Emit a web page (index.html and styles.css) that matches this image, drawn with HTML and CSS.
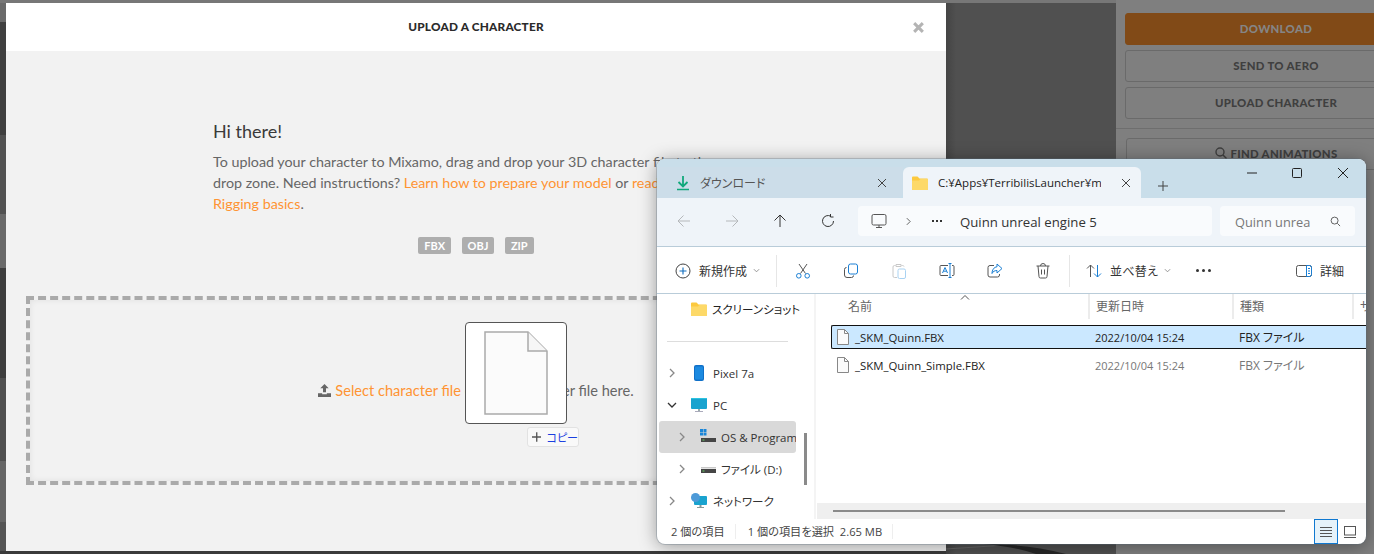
FILE: index.html
```html
<!DOCTYPE html>
<html lang="ja">
<head>
  <meta charset="UTF-8">
  <title>Upload a character</title>
  <link rel="stylesheet" href="styles.css">
</head>
<body>
  <div class="desk">
    <div class="left-strip"></div>

    <section class="modal">
      <header class="modal-head">
        <h1>UPLOAD A CHARACTER</h1>
        <svg class="modal-x" viewBox="0 0 12 12"><path d="M2 2l8 8M10 2l-8 8"/></svg>
      </header>
      <div class="modal-body">
        <div class="intro">
          <h2>Hi there!</h2>
          <p>To upload your character to Mixamo, drag and drop your 3D character file to the<br>drop zone. Need instructions? <a>Learn how to prepare your model</a> or <a>read Auto-</a><br><a>Rigging basics</a>.</p>
        </div>
        <div class="chips">
          <span class="chip">FBX</span>
          <span class="chip">OBJ</span>
          <span class="chip">ZIP</span>
        </div>
        <div class="drop">
          <svg class="upload-ico" viewBox="0 0 14 14"><path d="M7 0l4.500 4.500H8.600V9H5.400V4.500H2.500z"/><path d="M0 10h4.500v1h5v-1H14v4H0z"/></svg>
          <a>Select character file</a>&nbsp;or drop character file here.
        </div>
      </div>
    </section>

    <div class="gutter">
      <svg class="scene" viewBox="0 0 170 10"><path d="M0 5L60 1l50 9" fill="none" stroke="#666" stroke-width="1"/><path d="M38 0C60 0 90 2 120 10H90C75 5 60 2 38 0z" fill="#272727"/></svg>
    </div>

    <aside class="side">
      <div class="side-btns">
        <div class="btn btn-dl">DOWNLOAD</div>
        <div class="btn">SEND TO AERO</div>
        <div class="btn">UPLOAD CHARACTER</div>
      </div>
      <div class="side-find">
        <div class="btn">
          <svg class="find-ico" viewBox="0 0 12 12"><circle cx="5" cy="5" r="4"/><path d="M8 8l3.500 3.500"/></svg>
          FIND ANIMATIONS
        </div>
      </div>
    </aside>

    <!-- file being dragged over the drop zone -->
    <div class="ghost">
      <svg viewBox="0 0 64 84" width="64" height="84"><path d="M1 1h43l19 19v63H1z" fill="#fbfbfb" stroke="#ababab" stroke-width="1.500"/><path d="M44 1v19h19" fill="#f6f6f6" stroke="#ababab" stroke-width="1.500"/></svg>
    </div>
    <div class="copy-tip">
      <svg class="plus" viewBox="0 0 10 10"><path d="M5 0v10M0 5h10"/></svg>
      <span class="copy-word">コピー</span>
    </div>

    <section class="win">
      <div class="tabs">
        <div class="tab">
          <svg class="ico" viewBox="0 0 16 16"><path d="M8 1v10M3.500 7L8 11.500 12.500 7" fill="none" stroke="#12a87c" stroke-width="1.800"/><path d="M2 14.500h12" stroke="#12a87c" stroke-width="1.600"/></svg>
          <span class="tab-name">ダウンロード</span>
          <svg class="tab-x" viewBox="0 0 10 10"><path d="M1 1l8 8M9 1l-8 8"/></svg>
        </div>
        <div class="tab tab-on">
          <svg class="ico" viewBox="0 0 16 16"><path d="M0 2.500A1 1 0 0 1 1 1.500h4.500l2 2H15a1 1 0 0 1 1 1V14a1 1 0 0 1-1 1H1a1 1 0 0 1-1-1z" fill="#fcc93f"/><path d="M0 5.500h7l1.500-1.500H16V14a1 1 0 0 1-1 1H1a1 1 0 0 1-1-1z" fill="#fdd968"/></svg>
          <span class="tab-name">C:¥Apps¥TerribilisLauncher¥m</span>
          <svg class="tab-x" viewBox="0 0 10 10"><path d="M1 1l8 8M9 1l-8 8"/></svg>
        </div>
        <svg class="tab-plus" viewBox="0 0 12 12"><path d="M6 1v10M1 6h10"/></svg>
        <div class="win-ctrls">
          <svg viewBox="0 0 12 12"><path d="M1 6h10"/></svg>
          <svg viewBox="0 0 12 12"><rect x="1.500" y="1.500" width="9" height="9" rx="1"/></svg>
          <svg viewBox="0 0 12 12"><path d="M1 1l10 10M11 1L1 11"/></svg>
        </div>
      </div>

      <div class="nav">
        <div class="nav-btns">
          <svg class="faded" viewBox="0 0 14 14"><path d="M13 7H1M6.500 1.500L1 7l5.500 5.500"/></svg>
          <svg class="faded" viewBox="0 0 14 14"><path d="M1 7h12M7.500 1.500L13 7l-5.500 5.500"/></svg>
          <svg viewBox="0 0 14 14"><path d="M7 13V1M1.500 6.500L7 1l5.500 5.500"/></svg>
          <svg viewBox="0 0 14 14"><path d="M12.500 7A5.500 5.500 0 1 1 9.800 2.300M9.500 0v3h3"/></svg>
        </div>
        <div class="addr">
          <svg class="addr-pc" viewBox="0 0 16 16"><rect x="1" y="1.500" width="14" height="10.500" rx="1.500"/><path d="M5 14.500h6M8 12v2.500"/></svg>
          <svg class="addr-chev" viewBox="0 0 6 10"><path d="M1 1l4 4-4 4"/></svg>
          <span class="addr-dots"><b></b><b></b><b></b></span>
          <span class="addr-text">Quinn unreal engine 5</span>
        </div>
        <div class="search">
          <span class="search-text">Quinn unrea</span>
          <svg viewBox="0 0 12 12"><circle cx="5" cy="5" r="3.800"/><path d="M8 8l3 3"/></svg>
        </div>
      </div>

      <div class="tools">
        <div class="tool tool-new">
          <svg viewBox="0 0 16 16"><circle cx="8" cy="8" r="7" fill="none" stroke="#444" stroke-width="1"/><path d="M8 4.500v7M4.500 8h7" stroke="#0f6cbd" stroke-width="1.100"/></svg>
          <span>新規作成</span>
          <svg class="caret" viewBox="0 0 8 5"><path d="M1 1l3 3 3-3"/></svg>
        </div>
        <i class="tool-sep"></i>
        <div class="tool-icons">
          <svg viewBox="0 0 16 16"><path d="M4 1l6.500 9.500M12 1L5.500 10.500" fill="none" stroke="#555" stroke-width="1"/><circle cx="3.800" cy="12.800" r="2.300" fill="none" stroke="#1a7fd4"/><circle cx="12.200" cy="12.800" r="2.300" fill="none" stroke="#1a7fd4"/></svg>
          <svg viewBox="0 0 16 16"><rect x="5.500" y="1" width="9" height="10" rx="2" fill="none" stroke="#1a7fd4"/><path d="M3.500 4.500A2 2 0 0 0 1.500 6.500V12a2.500 2.500 0 0 0 2.500 2.500h4.500a2 2 0 0 0 2-2" fill="none" stroke="#555"/></svg>
          <svg viewBox="0 0 16 16"><path d="M4.500 2.500h-1a1.500 1.500 0 0 0-1.500 1.500v9A1.500 1.500 0 0 0 3.500 14.500H6M10.500 2.500h1A1.500 1.500 0 0 1 13 3.500M5 1.500h5v2H5z" fill="none" stroke="#c8c8c8"/><rect x="7" y="6" width="7.500" height="9.500" rx="1.500" fill="none" stroke="#a9d2f2"/></svg>
          <svg viewBox="0 0 16 16"><path d="M9 2.500H2A1 1 0 0 0 1 3.500v8a1 1 0 0 0 1 1h7M13 2.500h1a1 1 0 0 1 1 1v8a1 1 0 0 1-1 1h-1" fill="none" stroke="#555"/><path d="M11 .5v14M9.500.5h3M9.500 14.500h3" fill="none" stroke="#1a7fd4"/><path d="M3.500 10L6 4.500 8.500 10M4.500 8.200h3" fill="none" stroke="#1a7fd4"/></svg>
          <svg viewBox="0 0 16 16"><path d="M7 2.500H3A2 2 0 0 0 1 4.500V12a2 2 0 0 0 2 2h7.500a2 2 0 0 0 2-2v-1" fill="none" stroke="#555"/><path d="M10 1l5 4.500-5 4.500V7.500C7.500 7.500 6 8.500 5 10.500 5 7 7 4 10 3.800z" fill="none" stroke="#1a7fd4"/></svg>
          <svg viewBox="0 0 16 16"><path d="M1.500 3h13M5.500 3a2.500 2.500 0 0 1 5 0M3 3l1 10.500A1.500 1.500 0 0 0 5.500 15h5a1.500 1.500 0 0 0 1.500-1.500L13 3M6.500 6.500v5M9.500 6.500v5" fill="none" stroke="#555"/></svg>
        </div>
        <i class="tool-sep tool-sep-two"></i>
        <div class="tool tool-sort">
          <svg viewBox="0 0 16 16"><path d="M4.500 14V2M1 5.500L4.500 2 8 5.500" fill="none" stroke="#555"/><path d="M11.500 2v12M8 10.500l3.500 3.500 3.500-3.500" fill="none" stroke="#1a7fd4"/></svg>
          <span>並べ替え</span>
          <svg class="caret" viewBox="0 0 8 5"><path d="M1 1l3 3 3-3"/></svg>
        </div>
        <div class="tool-more"><b></b><b></b><b></b></div>
        <div class="tool tool-detail">
          <svg viewBox="0 0 16 12"><rect x=".5" y=".5" width="15" height="11" rx="2" fill="none" stroke="#555"/><path d="M10.500.5h3a2 2 0 0 1 2 2v7a2 2 0 0 1-2 2h-3zM12 3.500h2M12 6h2M12 8.500h2" fill="none" stroke="#1a7fd4"/></svg>
          <span>詳細</span>
        </div>
      </div>

      <div class="panes">
        <div class="tree">
          <div class="tree-row tree-shots">
            <svg class="ico" viewBox="0 0 16 16"><path d="M0 2.500A1 1 0 0 1 1 1.500h4.500l2 2H15a1 1 0 0 1 1 1V14a1 1 0 0 1-1 1H1a1 1 0 0 1-1-1z" fill="#fcc93f"/><path d="M0 5.500h7l1.500-1.500H16V14a1 1 0 0 1-1 1H1a1 1 0 0 1-1-1z" fill="#fdd968"/></svg>
            <span>スクリーンショット</span>
          </div>
          <hr class="tree-rule">
          <div class="tree-row">
            <svg class="chev" viewBox="0 0 6 10"><path d="M1 1l4 4-4 4"/></svg>
            <svg class="ico" viewBox="0 0 16 16"><rect x="3" y="0" width="10" height="16" rx="2" fill="#1070c8"/><rect x="4" y="1.500" width="8" height="13" rx="1" fill="#1c8ae0"/></svg>
            <span>Pixel 7a</span>
          </div>
          <div class="tree-row">
            <svg class="chev chev-open" viewBox="0 0 10 6"><path d="M1 1l4 4 4-4"/></svg>
            <svg class="ico" viewBox="0 0 16 16"><rect x="0" y="1" width="16" height="11" rx="1" fill="#19a3cf"/><rect x="0" y="1" width="16" height="1" fill="#2cc3e0"/><rect x="7" y="12" width="2" height="2" fill="#9aa"/><rect x="4" y="14" width="8" height="1" fill="#aab"/></svg>
            <span>PC</span>
          </div>
          <div class="tree-row tree-sub tree-sel">
            <svg class="chev" viewBox="0 0 6 10"><path d="M1 1l4 4-4 4"/></svg>
            <svg class="ico" viewBox="0 0 16 16"><path d="M0 0h3v3H0zM3.500 0h3v3h-3zM0 3.500h3v3H0zM3.500 3.500h3v3h-3z" fill="#1a86d8"/><rect x="1" y="9" width="15" height="4" fill="#454545"/><rect x="2.500" y="10.500" width="2" height="1" fill="#6c6"/></svg>
            <span>OS &amp; Program</span>
          </div>
          <div class="tree-row tree-sub">
            <svg class="chev" viewBox="0 0 6 10"><path d="M1 1l4 4-4 4"/></svg>
            <svg class="ico" viewBox="0 0 16 16"><rect x="1" y="6" width="15" height="1.500" fill="#c9c9c9"/><rect x="1" y="8" width="15" height="4" fill="#454545"/><rect x="2.500" y="9.500" width="2" height="1" fill="#6c6"/></svg>
            <span>ファイル (D:)</span>
          </div>
          <div class="tree-row">
            <svg class="chev" viewBox="0 0 6 10"><path d="M1 1l4 4-4 4"/></svg>
            <svg class="ico" viewBox="0 0 16 16"><rect x="3" y="3" width="13" height="9" rx="1" fill="#19a3cf"/><circle cx="4.500" cy="4.500" r="4.500" fill="#4d9ad8"/><rect x="8.500" y="12" width="2" height="2" fill="#899"/><rect x="6" y="14" width="7" height="1" fill="#899"/></svg>
            <span>ネットワーク</span>
          </div>
          <div class="tree-bar"></div>
        </div>

        <div class="list">
          <div class="list-head">
            <span class="col col-name">名前</span>
            <span class="col col-date">更新日時</span>
            <span class="col col-type">種類</span>
            <span class="col col-size">サイズ</span>
            <svg class="sort-mark" viewBox="0 0 10 5"><path d="M1 4.500l4-4 4 4"/></svg>
          </div>
          <div class="row row-on">
            <span class="file-name">
              <svg viewBox="0 0 12 16"><path d="M.5.500h7l4 4v11H.5z" fill="#fbfbfb" stroke="#888"/><path d="M7.500.500v4h4" fill="none" stroke="#888"/></svg>
              _SKM_Quinn.FBX
            </span>
            <span class="file-date">2022/10/04 15:24</span>
            <span class="file-type">FBX ファイル</span>
          </div>
          <div class="row">
            <span class="file-name">
              <svg viewBox="0 0 12 16"><path d="M.5.500h7l4 4v11H.5z" fill="#fbfbfb" stroke="#888"/><path d="M7.500.500v4h4" fill="none" stroke="#888"/></svg>
              _SKM_Quinn_Simple.FBX
            </span>
            <span class="file-date">2022/10/04 15:24</span>
            <span class="file-type">FBX ファイル</span>
          </div>
          <div class="hscroll"><div class="hscroll-bar"></div></div>
        </div>
      </div>

      <footer class="status">
        <span class="stat">2 個の項目</span>
        <span class="stat">1 個の項目を選択&nbsp; 2.65 MB</span>
        <div class="views">
          <div class="view view-on">
            <svg viewBox="0 0 12 10"><path d="M0 .5h12M0 3.500h12M0 6.500h12M0 9.500h12"/></svg>
          </div>
          <div class="view">
            <svg viewBox="0 0 12 12"><rect x=".5" y=".5" width="11" height="8.500"/><path d="M0 11.500h12"/></svg>
          </div>
        </div>
      </footer>
    </section>
  </div>
</body>
</html>
```

FILE: styles.css
```css
* {
  box-sizing: border-box;
}

html, body {
  margin: 0;
  height: 100%;
  overflow: hidden;
}

body {
  font-family: "Lato", "Noto Sans", sans-serif;
  background-color: #3a3a3a;
}

.desk {
  position: relative;
  display: flex;
  width: 1374px;
  height: 554px;
  padding-top: 3px;
  overflow: hidden;
  background: linear-gradient(#777 3px, #3a3a3a 3px);
}

.left-strip {
  width: 6px;
  height: 548px;
  background: linear-gradient(#6a6a6a 19px, #404040 19px, #404040 132px, #525252 132px, #525252 211px, #6a6a6a 211px, #6a6a6a 265px, #3e3e3e 265px, #3e3e3e 375px, #505050 375px, #505050 458px, #666 458px, #666 519px, #555 519px);
}

/* upload dialog */
.modal {
  width: 940px;
  height: 548px;
  display: flex;
  flex-direction: column;
  flex-shrink: 0;
}

.modal-head {
  height: 48px;
  flex-shrink: 0;
  background-color: #fff;
  display: flex;
  align-items: center;
  justify-content: center;
  position: relative;
}

.modal-head h1 {
  margin: 0 0 1px;
  font-size: 11.800px;
  font-weight: 900;
  color: #2b2b2b;
  letter-spacing: .2px;
}

.modal-x {
  position: absolute;
  right: 21px;
  top: 18px;
  width: 13px;
  height: 13px;
  fill: none;
  stroke: #b4b4b4;
  stroke-width: 2.800;
}

.modal-body {
  flex: 1;
  background-color: #f2f2f2;
  padding: 0 20px;
}

.intro {
  width: 530px;
  margin: 69px 0 0 187px;
  color: #666;
}

.intro h2 {
  margin: 0 0 9px;
  font-size: 18px;
  line-height: 22px;
  font-weight: 400;
  color: #3a3a3a;
}

.intro p {
  margin: 0;
  font-size: 14.300px;
  line-height: 21px;
  white-space: nowrap;
}

a {
  color: #ff9433;
}

.chips {
  display: flex;
  justify-content: center;
  gap: 10.500px;
  margin-top: 23px;
}

.chip {
  background-color: #aeaeae;
  color: #fff;
  font-size: 11px;
  font-weight: 700;
  line-height: 17px;
  padding: 0 6px;
  border-radius: 2px;
}

.drop {
  margin-top: 42px;
  height: 189px;
  border: 4px dashed #aaa;
  box-shadow: inset 0 0 6px rgba(0, 0, 0, .08);
  display: flex;
  align-items: center;
  justify-content: center;
  color: #666;
  font-size: 14.600px;
  white-space: nowrap;
}

.upload-ico {
  width: 13px;
  height: 13px;
  fill: #666;
  margin-right: 4px;
}

.gutter {
  width: 170px;
  flex-shrink: 0;
  position: relative;
  background: linear-gradient(90deg, #444 0, #505050 10px);
}

.scene {
  position: absolute;
  left: 0;
  bottom: 0;
  width: 170px;
  height: 10px;
}

/* greyed side panel behind the overlay */
.side {
  width: 258px;
  flex-shrink: 0;
  background-color: #7f7f7f;
  margin-top: -3px;
  padding-top: 3px;
}

.side-btns {
  padding: 10px 0 9px 9px;
  width: 311px;
  display: flex;
  flex-direction: column;
  gap: 5px;
  border-bottom: 1px solid #6e6e6e;
}

.side-find {
  padding: 9px 0 0 10px;
  width: 311px;
}

.btn {
  height: 32px;
  padding-bottom: 2px;
  border: 1px solid #6a6a6a;
  border-radius: 3px;
  display: flex;
  align-items: center;
  justify-content: center;
  gap: 3px;
  color: #3f3f3f;
  font-size: 11.400px;
  font-weight: 900;
  letter-spacing: .3px;
}

.btn-dl {
  background-color: #814a17;
  border-color: #814a17;
  color: #858585;
}

.find-ico {
  width: 12px;
  height: 12px;
  fill: none;
  stroke: #3f3f3f;
  stroke-width: 1.400;
}

/* drag ghost */
.ghost {
  position: absolute;
  left: 465px;
  top: 322px;
  width: 102px;
  height: 102px;
  background-color: #fff;
  border: 1px solid #555;
  border-radius: 4px;
  display: flex;
  align-items: center;
  justify-content: center;
}

.copy-tip {
  position: absolute;
  left: 527px;
  top: 427px;
  width: 52px;
  height: 20px;
  background-color: #f9f9f9;
  border: 1px solid #e2e2e2;
  border-radius: 3px;
  display: flex;
  align-items: center;
  padding-left: 4px;
  gap: 5px;
  font-family: "Noto Sans CJK JP", sans-serif;
  font-size: 11px;
  font-feature-settings: "palt";
}

.plus {
  width: 10px;
  height: 10px;
  fill: none;
  stroke: #555;
  stroke-width: 1.400;
}

.copy-word {
  color: #1a3fe0;
  white-space: nowrap;
}

/* explorer window */
.win {
  position: absolute;
  left: 657px;
  top: 159px;
  width: 709px;
  height: 385px;
  border-radius: 8px;
  overflow: hidden;
  background-color: #fff;
  box-shadow: 0 0 0 1px rgba(90, 110, 125, .3), 0 2px 18px rgba(0, 0, 0, .38);
  display: flex;
  flex-direction: column;
  font-family: "Open Sans", "Noto Sans CJK JP", sans-serif;
  font-feature-settings: "palt";
  font-size: 12px;
  color: #333;
}

.tabs {
  height: 39px;
  flex-shrink: 0;
  background-color: #c9deea;
  padding-top: 8px;
  display: flex;
  align-items: stretch;
}

.tab {
  width: 246px;
  padding: 0 16px 0 18px;
  display: flex;
  align-items: center;
  gap: 9px;
  background-color: #ccdde9;
  border-radius: 0 0 6px 0;
}

.tab-on {
  width: 238px;
  padding: 0 15px 0 9px;
  gap: 10px;
  background-color: #eff4f9;
  border-radius: 6px 6px 0 0;
}

.tab-name {
  flex: 1;
  overflow: hidden;
  white-space: nowrap;
  color: #555;
  font-size: 12px;
}

.tab-on .tab-name {
  flex: none;
  width: 163px;
  margin-right: 10px;
  font-size: 11.500px;
  color: #222;
}

.tab-x {
  width: 10px;
  height: 10px;
  flex-shrink: 0;
  fill: none;
  stroke: #444;
}

.ico {
  width: 16px;
  height: 16px;
  flex-shrink: 0;
}

.tab-plus {
  width: 12px;
  height: 12px;
  margin: 13px 0 0 16px;
  fill: none;
  stroke: #444;
}

.win-ctrls {
  margin-left: auto;
  display: flex;
  gap: 34px;
  padding: 1px 17px 0 0;
  margin-top: -1px;
}

.win-ctrls svg {
  width: 12px;
  height: 12px;
  fill: none;
  stroke: #222;
}

.win-ctrls svg:first-child {
  margin-right: -1px;
}

.nav {
  height: 49px;
  flex-shrink: 0;
  background-color: #eff4f9;
  border-bottom: 1px solid #b9ccd9;
  padding: 8px 11px 10px 0;
  display: flex;
  gap: 8px;
}

.nav-btns {
  width: 193px;
  padding: 0 15px 0 20px;
  display: flex;
  align-items: center;
  justify-content: space-between;
}

.nav-btns svg {
  width: 14px;
  height: 14px;
  fill: none;
  stroke: #333;
}

.nav-btns .faded {
  stroke: #b5b8bb;
}

.addr {
  width: 354px;
  background-color: #f9fbfd;
  border-radius: 4px;
  display: flex;
  align-items: center;
  padding-left: 13px;
  font-size: 13.200px;
  color: #333;
}

.addr-pc {
  width: 16px;
  height: 16px;
  fill: none;
  stroke: #555;
}

.addr-chev {
  width: 5px;
  height: 9px;
  margin: 0 21px 0 19px;
  fill: none;
  stroke: #444;
}

.addr-dots {
  display: flex;
  gap: 2px;
  margin-right: 18px;
}

.addr-dots b {
  width: 2px;
  height: 2px;
  background-color: #333;
}

.addr-text {
  padding-top: 1px;
  white-space: nowrap;
}

.search {
  flex: 1;
  background-color: #f9fbfd;
  border-radius: 4px;
  display: flex;
  align-items: center;
  justify-content: space-between;
  padding: 1px 14px 0 15px;
  font-size: 12.800px;
  color: #777;
}

.search-text {
  width: 75px;
  overflow: hidden;
  white-space: nowrap;
}

.search svg {
  width: 11px;
  height: 11px;
  fill: none;
  stroke: #555;
}

.tools {
  height: 47px;
  flex-shrink: 0;
  border-bottom: 1px solid #b9ccd9;
  padding: 1px 0 0 18px;
  display: flex;
  align-items: center;
  color: #333;
}

.tool {
  display: flex;
  align-items: center;
  white-space: nowrap;
}

.tool svg {
  flex-shrink: 0;
}

.tool-new svg:first-child {
  width: 16px;
  height: 16px;
  margin-right: 8px;
}

.caret {
  width: 7px;
  height: 5px;
  margin-left: 6px;
  fill: none;
  stroke: #888;
}

.tool-sep {
  width: 1px;
  height: 32px;
  flex-shrink: 0;
  background-color: #e6e6e6;
  margin: 0 0 0 16px;
}

.tool-icons {
  display: flex;
  gap: 32px;
  margin: 0 0 0 18px;
  width: 258px;
  flex-shrink: 0;
}

.tool-icons svg {
  width: 16px;
  height: 16px;
  flex-shrink: 0;
}

.tool-sep-two {
  margin-left: 16px;
}

.tool-sort {
  margin-left: 16px;
  letter-spacing: .3px;
}

.tool-sort svg:first-child {
  width: 16px;
  height: 16px;
  margin-right: 8px;
}

.tool-more {
  display: flex;
  gap: 3px;
  margin-left: 25px;
}

.tool-more b {
  width: 3px;
  height: 3px;
  border-radius: 50%;
  background-color: #333;
}

.tool-detail {
  margin-left: auto;
  margin-right: 22px;
}

.tool-detail svg {
  width: 16px;
  height: 12px;
  margin-right: 8px;
}

.panes {
  flex: 1;
  display: flex;
  min-height: 0;
}

/* navigation tree */
.tree {
  width: 159px;
  flex-shrink: 0;
  position: relative;
  border-right: 2px solid #f4f4f4;
  padding-top: 3px;
}

.tree-row {
  height: 32px;
  padding-left: 12px;
  display: flex;
  align-items: center;
  gap: 6px;
  white-space: nowrap;
  overflow: hidden;
  font-size: 11.500px;
  color: #333;
}

.tree-shots {
  padding-left: 34px;
  gap: 5px;
  height: 24px;
  color: #222;
}

.tree-rule {
  margin: 20px 26px 15px 10px;
  border: 0;
  border-top: 1px solid #ddd;
}

.chev {
  width: 6px;
  height: 10px;
  flex-shrink: 0;
  fill: none;
  stroke: #888;
  stroke-width: 1.300;
}

.chev-open {
  width: 10px;
  height: 6px;
  margin-left: -2px;
  stroke: #333;
}

.tree-row .chev + .ico {
  margin-left: 10px;
}

.tree-row .chev-open + .ico {
  margin-left: 8px;
}

.tree-sub {
  margin-left: 2px;
  width: 137px;
  padding-left: 20px;
}

.tree-sub .chev + .ico {
  margin-left: 9px;
}

.tree-sub .ico + span {
  margin-left: -1px;
}

.tree-sel {
  background-color: #d9d9d9;
  border-radius: 3px;
}

.tree-bar {
  position: absolute;
  right: 7px;
  top: 139px;
  width: 3px;
  height: 52px;
  background-color: #8a8a8a;
}

/* file list */
.list {
  flex: 1;
  position: relative;
  min-width: 0;
  overflow: hidden;
}

.list-head {
  height: 31px;
  display: flex;
  align-items: flex-start;
  padding-left: 32px;
  position: relative;
  color: #666;
}

.col {
  height: 25px;
  flex-shrink: 0;
  border-right: 2px solid #ececec;
  line-height: 26px;
  font-size: 12px;
}

.col-name {
  width: 242px;
}

.col-date {
  width: 144px;
  padding-left: 6px;
}

.col-type {
  width: 120px;
  padding-left: 6px;
}

.col-size {
  border-right: 0;
  padding-left: 6px;
  white-space: nowrap;
}

.sort-mark {
  position: absolute;
  left: 144px;
  top: 1px;
  width: 10px;
  height: 5px;
  fill: none;
  stroke: #555;
}

.row {
  height: 24px;
  margin: 0 0 4px 15px;
  width: 560px;
  display: flex;
  align-items: center;
  color: #777;
  border: 1px solid transparent;
  border-right: 0;
  white-space: nowrap;
}

.row-on {
  background-color: #cbe8ff;
  border-color: #111;
  border-radius: 2px 0 0 2px;
  color: #222;
}

.file-name {
  width: 257px;
  display: flex;
  align-items: center;
  gap: 6px;
  padding-left: 5px;
  font-size: 11.400px;
  color: #222;
}

.file-name svg {
  width: 12px;
  height: 16px;
  flex-shrink: 0;
}

.file-date {
  width: 144px;
  padding-left: 6px;
  font-size: 11px;
}

.file-type {
  padding-left: 6px;
  font-size: 12px;
}

.hscroll {
  position: absolute;
  left: 1px;
  right: 0;
  bottom: 0;
  height: 16px;
  background-color: #efefef;
}

.hscroll-bar {
  margin: 7px 0 0 16px;
  width: 452px;
  height: 2px;
  background-color: #8a8a8a;
}

.status {
  height: 25px;
  flex-shrink: 0;
  display: flex;
  align-items: center;
  padding-left: 14px;
  color: #444;
  font-size: 11.200px;
}

.stat {
  padding-right: 10px;
  margin-right: 12px;
  border-right: 1px solid #eee;
  line-height: 15px;
  white-space: nowrap;
}

.views {
  margin-left: auto;
  margin-right: 4px;
  display: flex;
  height: 100%;
}

.view {
  width: 24px;
  display: flex;
  align-items: center;
  justify-content: center;
}

.view-on {
  background-color: #e5f2fa;
  border: 1px solid #0f78d0;
}

.view svg {
  width: 12px;
  height: 12px;
  fill: none;
  stroke: #555;
}
```
